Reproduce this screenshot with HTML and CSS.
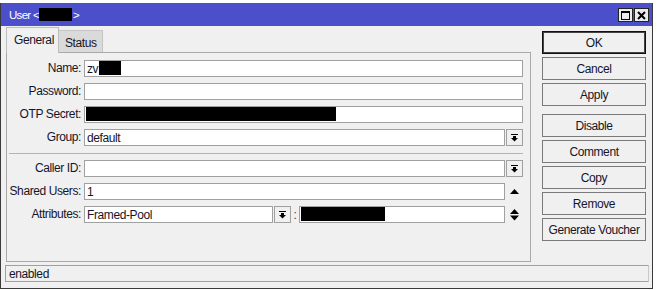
FILE: index.html
```html
<!DOCTYPE html>
<html>
<head>
<meta charset="utf-8">
<link rel="stylesheet" href="styles.css">
</head>
<body>
<div class="window">
  <div class="titlebar">
    <span class="title">User &lt;<span class="redact r-title"></span>&gt;</span>
    <div class="tbtns">
      <span class="tbtn"><svg width="9" height="9" viewBox="0 0 9 9"><rect x="0.5" y="0.5" width="8" height="8" fill="none" stroke="#000"/><rect x="0" y="0" width="9" height="2" fill="#000"/></svg></span>
      <span class="tbtn"><svg width="9" height="9" viewBox="0 0 9 9"><path d="M1 1 L8 8 M8 1 L1 8" stroke="#000" stroke-width="2"/></svg></span>
    </div>
  </div>
  <div class="main">
    <div class="leftcol">
      <div class="tabs">
        <div class="tab active">General</div>
        <div class="tab">Status</div>
      </div>
      <div class="panel">
        <div class="grid">
          <div class="lbl">Name:</div>
          <div class="row"><div class="field">zv<span class="redact r-name"></span></div></div>
          <div class="lbl">Password:</div>
          <div class="row"><div class="field"></div></div>
          <div class="lbl">OTP Secret:</div>
          <div class="row"><div class="field nopad"><span class="redact r-otp"></span></div></div>
          <div class="lbl">Group:</div>
          <div class="row"><div class="field">default</div><span class="dd"><svg width="7" height="8" viewBox="0 0 7 8"><rect x="0" y="0" width="7" height="1" fill="#000"/><rect x="2" y="2" width="3" height="2" fill="#000"/><polygon points="0,4 7,4 3.5,7.5" fill="#000"/></svg></span></div>
        </div>
        <div class="sep"></div>
        <div class="grid">
          <div class="lbl">Caller ID:</div>
          <div class="row"><div class="field"></div><span class="dd"><svg width="7" height="8" viewBox="0 0 7 8"><rect x="0" y="0" width="7" height="1" fill="#000"/><rect x="2" y="2" width="3" height="2" fill="#000"/><polygon points="0,4 7,4 3.5,7.5" fill="#000"/></svg></span></div>
          <div class="lbl">Shared Users:</div>
          <div class="row"><div class="field">1</div><span class="arr"><svg width="9" height="5" viewBox="0 0 9 5"><polygon points="0,5 9,5 4.5,0" fill="#000"/></svg></span></div>
          <div class="lbl">Attributes:</div>
          <div class="row"><div class="field f-attr">Framed-Pool</div><span class="dd"><svg width="7" height="8" viewBox="0 0 7 8"><rect x="0" y="0" width="7" height="1" fill="#000"/><rect x="2" y="2" width="3" height="2" fill="#000"/><polygon points="0,4 7,4 3.5,7.5" fill="#000"/></svg></span><span class="colon">:</span><div class="field nopad"><span class="redact r-attr"></span></div><span class="arr"><svg width="9" height="12" viewBox="0 0 9 12"><polygon points="0,5 9,5 4.5,0" fill="#000"/><polygon points="0,6.5 9,6.5 4.5,11.5" fill="#000"/></svg></span></div>
        </div>
      </div>
    </div>
    <div class="btncol">
      <div class="btn default">OK</div>
      <div class="btn">Cancel</div>
      <div class="btn">Apply</div>
      <div class="btn gapped">Disable</div>
      <div class="btn">Comment</div>
      <div class="btn">Copy</div>
      <div class="btn">Remove</div>
      <div class="btn">Generate Voucher</div>
    </div>
  </div>
  <div class="status">enabled</div>
</div>
</body>
</html>
```
FILE: styles.css
```css
* { box-sizing: border-box; }
html, body { margin: 0; padding: 0; }
body {
  background: #ffffff;
  font-family: "Liberation Sans", Arial, sans-serif;
  font-size: 12px;
  letter-spacing: -0.4px;
  color: #15152a;
  width: 657px;
  height: 290px;
  overflow: hidden;
}
.window {
  margin-top: 3px;
  width: 653px;
  height: 286px;
  background: #f0f0f0;
  border-left: 1px solid #3a3a3a;
  border-right: 1px solid #3a3a3a;
  border-bottom: 1px solid #3a3a3a;
  display: flex;
  flex-direction: column;
}
.titlebar {
  height: 23px;
  background: #4c4fca;
  display: flex;
  align-items: center;
  justify-content: space-between;
  padding: 0 3px 0 8px;
}
.title {
  color: #fff;
  display: flex;
  align-items: center;
  font-size: 11.5px;
  letter-spacing: -0.7px;
}
.redact {
  display: inline-block;
  background: #000;
}
.r-title { width: 33px; height: 13px; margin: 0 1px 0 0; }
.tbtns { display: flex; gap: 1px; margin-top: 1px; }
.tbtn {
  width: 15px;
  height: 14px;
  background: #ececec;
  border: 1px solid #222;
  display: flex;
  align-items: center;
  justify-content: center;
}
.main {
  display: flex;
  height: 236px;
}
.leftcol {
  margin-left: 5px;
  width: 525px;
  display: flex;
  flex-direction: column;
}
.tabs {
  height: 26px;
  display: flex;
  align-items: flex-end;
}
.tab {
  height: 22px;
  padding: 0 6px;
  border: 1px solid #c4c4c4;
  border-bottom: none;
  background: #dadada;
  display: flex;
  align-items: center;
}
.tab.active {
  height: 26px;
  width: 53px;
  background: #f0f0f0;
  padding: 0 0 2px 7px;
  border-color: #bdbdbd;
  position: relative;
  z-index: 1;
  margin-bottom: -1px;
}
.tab + .tab { border-left: none; width: 44px; padding: 2px 0 0 6px; }
.panel {
  height: 210px;
  border: 1px solid #a9a9a9;
  background: #f0f0f0;
  padding: 7px 7px 0 0;
}
.grid {
  display: grid;
  grid-template-columns: 74px 1fr;
  column-gap: 3px;
  row-gap: 6px;
}
.lbl {
  text-align: right;
  height: 17px;
  line-height: 17px;
  white-space: nowrap;
}
.row {
  display: flex;
  height: 17px;
  align-items: stretch;
}
.field {
  flex: 1;
  height: 17px;
  border: 1px solid #a0a0a0;
  background: #fff;
  padding: 0 2px;
  display: flex;
  align-items: center;
  white-space: nowrap;
}
.field.nopad { padding: 0 0 0 1px; align-items: flex-start; }
.f-attr { flex: 0 0 189px; }
.r-name { width: 22px; height: 14px; align-self: flex-start; margin-left: 1px; }
.r-otp { width: 250px; height: 14px; }
.r-attr { width: 84px; height: 14px; }
.dd {
  flex: 0 0 17px;
  margin-left: 1px;
  border: 1px solid #a0a0a0;
  background: #f0f0f0;
  display: flex;
  align-items: center;
  justify-content: center;
}
.arr {
  flex: 0 0 17px;
  margin-left: 1px;
  display: flex;
  align-items: center;
  justify-content: center;
}
.colon {
  flex: 0 0 8px;
  display: flex;
  align-items: center;
  justify-content: center;
  color: #444;
}
.sep {
  height: 1px;
  background: #b4b4b4;
  margin: 7px 0 6px 2px;
}
.btncol {
  margin-left: 11px;
  padding-top: 5px;
  display: flex;
  flex-direction: column;
  gap: 3px;
}
.btn {
  width: 104px;
  height: 23px;
  border: 1px solid #7a7a7a;
  background: #f0f0f0;
  display: flex;
  align-items: center;
  justify-content: center;
  white-space: nowrap;
}
.btn.default { border: 1px solid #111; box-shadow: inset 0 0 0 1px #444; }
.btn.gapped { margin-top: 5px; }
.status {
  margin: 3px 3px 0 4px;
  height: 17px;
  border: 1px solid #a0a0a0;
  border-right-color: #c8c8c8;
  display: flex;
  align-items: center;
  padding-left: 3px;
}
```
